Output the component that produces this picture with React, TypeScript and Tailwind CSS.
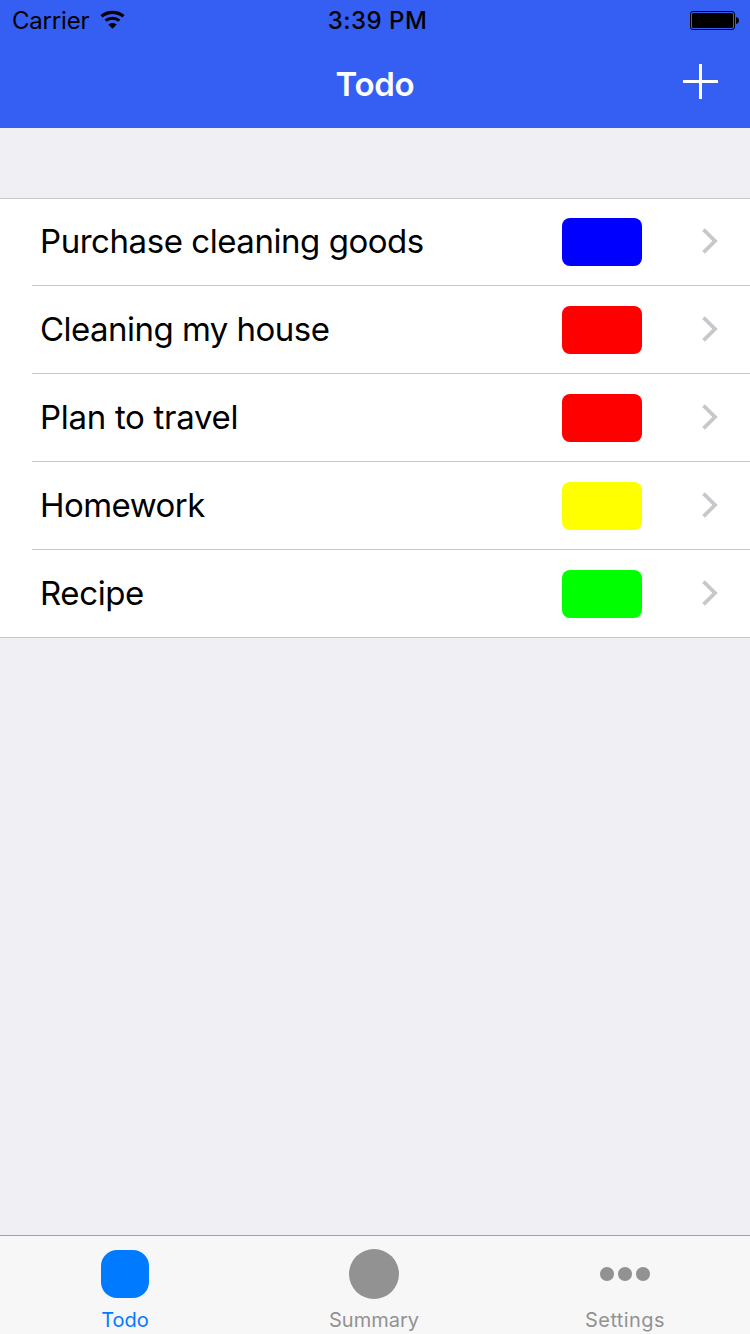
import React from "react";

type Todo = { title: string; swatch: string; tracking: string };

const todos: Todo[] = [
  { title: "Purchase cleaning goods", swatch: "bg-[#0000ff]", tracking: "tracking-[-0.45px]" },
  { title: "Cleaning my house", swatch: "bg-[#ff0000]", tracking: "tracking-[-0.53px]" },
  { title: "Plan to travel", swatch: "bg-[#ff0000]", tracking: "tracking-[-0.3px]" },
  { title: "Homework", swatch: "bg-[#ffff00]", tracking: "tracking-[-0.55px]" },
  { title: "Recipe", swatch: "bg-[#00ff00]", tracking: "tracking-[-0.4px]" },
];

function WifiIcon() {
  return (
    <svg className="ml-[11px] mt-[9px] h-[20px] w-[26px]" viewBox="0 0 26 20" fill="none" stroke="#000">
      <path d="M1.500 7.300C7.700 2 17.300 2 23.500 7.300" strokeWidth="3.200" />
      <path d="M5.600 11.700C9.600 8.300 15.400 8.300 19.400 11.700" strokeWidth="3" />
      <path d="M12.500 19.700L8.300 15.500C10.500 13.400 14.500 13.400 16.700 15.500Z" fill="#000" stroke="none" />
    </svg>
  );
}

function BatteryIcon() {
  return (
    <svg className="mt-[11px] h-[19px] w-[50px]" viewBox="0 0 50 19">
      <rect x="0.500" y="0.500" width="44" height="18" rx="2.500" fill="none" stroke="#000" />
      <rect x="2" y="2" width="41" height="15" rx="1.500" fill="#000" />
      <path d="M46 6C50 6.500 50 12.500 46 13Z" fill="#000" />
    </svg>
  );
}

function StatusBar() {
  return (
    <div className="grid h-[40px] grid-cols-3 text-[24px] leading-[42px] text-black">
      <div className="flex pl-[12px]">
        <span className="tracking-[-0.2px]">Carrier</span>
        <WifiIcon />
      </div>
      <div className="pl-[5px] text-center font-medium tracking-[0.5px]">3:39 PM</div>
      <div className="flex justify-end pr-[10px]">
        <BatteryIcon />
      </div>
    </div>
  );
}

function NavBar() {
  return (
    <div className="grid h-[88px] grid-cols-3 items-center text-white">
      <span />
      <h1 className="text-center text-[33px] font-semibold leading-[88px] tracking-[-0.3px]">Todo</h1>
      <button className="mr-[32px] mt-[-5px] justify-self-end" aria-label="Add">
        <svg className="block h-[35px] w-[35px]" viewBox="0 0 35 35" fill="#fff">
          <path d="M16 0h3v16h16v3H19v16h-3V19H0v-3h16z" />
        </svg>
      </button>
    </div>
  );
}

function Row({ todo, first }: { todo: Todo; first: boolean }) {
  return (
    <li className="pl-[32px]">
      <div
        className={
          first
            ? "flex h-[86px] items-center pl-[8px]"
            : "flex h-[88px] items-center border-t border-[#c8c7cc] pl-[8px]"
        }
      >
        <span className={`flex-1 whitespace-nowrap pb-[2px] text-[33px] leading-[84px] text-black ${todo.tracking}`}>
          {todo.title}
        </span>
        <span className={`h-[48px] w-[80px] rounded-[8px] ${todo.swatch}`} />
        <svg className="mb-[2px] ml-[60px] mr-[31px] h-[26px] w-[17px]" viewBox="0 0 17 26" fill="none">
          <path d="M1.500 1.700L13 13L1.500 24.300" stroke="#c7c7cc" strokeWidth="3.800" />
        </svg>
      </div>
    </li>
  );
}

function TabBar() {
  return (
    <nav className="grid h-[99px] grid-cols-[250px_248px_252px] border-t border-[#a3a3a8] bg-[#f7f7f8] text-[20px] leading-[24px] text-[#929292]">
      <div className="flex flex-col items-center text-[#007aff]">
        <div className="flex h-[76px] items-center">
          <span className="h-[48px] w-[48px] rounded-[16px] bg-[#007aff]" />
        </div>
        <span className="-mt-[4px] tracking-[0px]">Todo</span>
      </div>
      <div className="flex flex-col items-center">
        <div className="flex h-[76px] items-center">
          <span className="h-[50px] w-[50px] rounded-full bg-[#929292]" />
        </div>
        <span className="-mt-[4px] tracking-[0px]">Summary</span>
      </div>
      <div className="flex flex-col items-center pl-[2px]">
        <div className="flex h-[76px] items-center gap-[4px]">
          <span className="h-[14px] w-[14px] rounded-full bg-[#929292]" />
          <span className="h-[14px] w-[14px] rounded-full bg-[#929292]" />
          <span className="h-[14px] w-[14px] rounded-full bg-[#929292]" />
        </div>
        <span className="-mt-[4px] tracking-[0.4px]">Settings</span>
      </div>
    </nav>
  );
}

export default function App() {
  return (
    <div className="flex h-[1334px] w-[750px] flex-col overflow-hidden bg-[#efeff4] font-[Inter,sans-serif]">
      <header className="h-[128px] bg-[#345ff2]">
        <StatusBar />
        <NavBar />
      </header>
      <main className="flex-1 pt-[70px]">
        <ul className="border-y border-[#c8c7cc] bg-white">
          {todos.map((todo, i) => (
            <Row key={todo.title} todo={todo} first={i === 0} />
          ))}
        </ul>
      </main>
      <TabBar />
    </div>
  );
}
